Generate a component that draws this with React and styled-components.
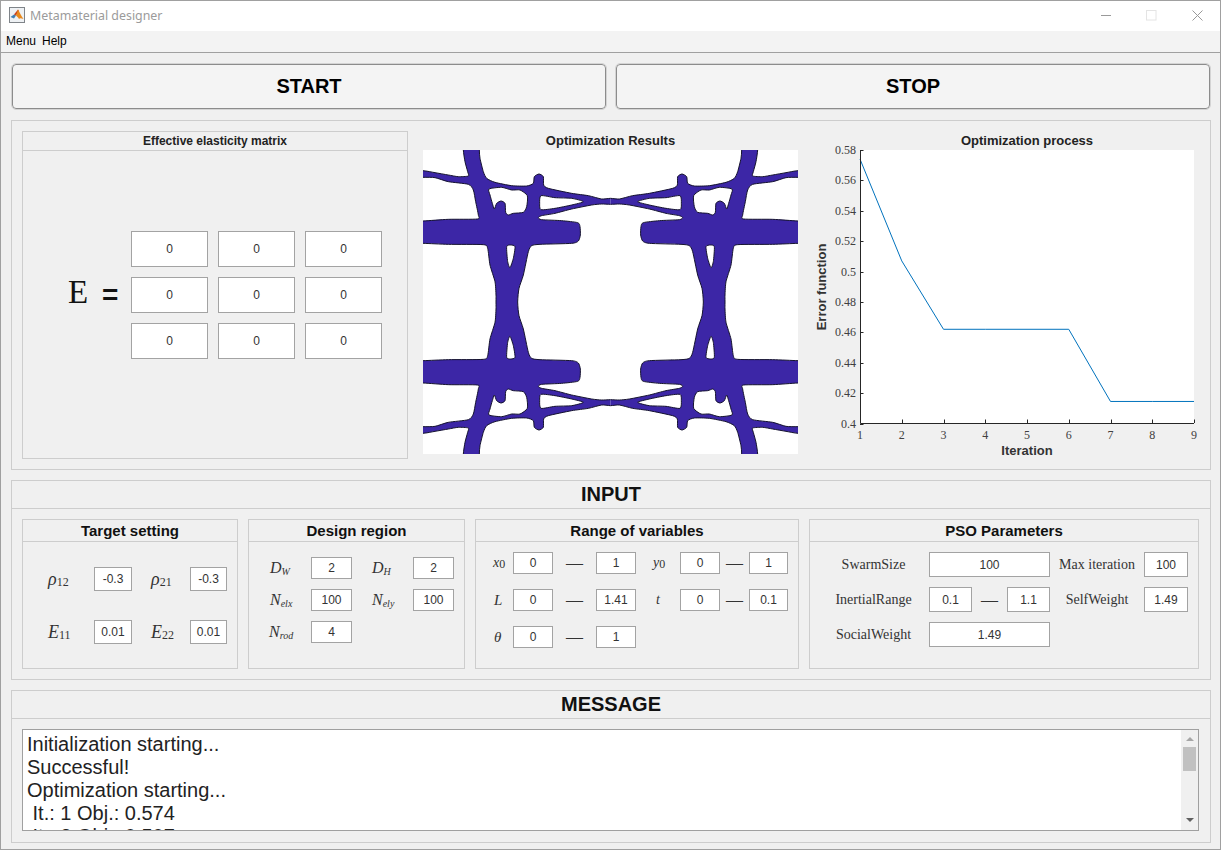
import styled, { createGlobalStyle } from "styled-components";

const GlobalStyle = createGlobalStyle`
  html, body {
    margin: 0;
    padding: 0;
    background: #f0f0f0;
    font-family: "Liberation Sans", Arial, sans-serif;
  }
  * {
    box-sizing: border-box;
  }
`;

const Win = styled.div`
  width: 1221px;
  height: 850px;
  overflow: hidden;
  background: #f0f0f0;
  border: 1px solid #a0a0a0;
`;

const TitleBar = styled.div`
  height: 30px;
  background: #fff;
  display: flex;
  align-items: center;
  padding: 0 0 2px 8px;
`;
const TitleText = styled.div`
  flex: 1;
  margin-left: 5px;
  font-family: "Noto Sans", sans-serif;
  font-size: 12.4px;
  color: #9b9b9b;
`;
const WinCtrl = styled.div`
  width: 45.5px;
  height: 28px;
  display: flex;
  align-items: center;
  justify-content: center;
`;

const MenuBar = styled.div`
  height: 22px;
  background: #f3f3f3;
  border-bottom: 1px solid #a0a0a0;
  display: flex;
  align-items: center;
  gap: 6px;
  padding: 0 5px 1px;
  font-size: 12px;
  color: #000;
`;

const Content = styled.div`
  padding: 11px 9px 0 10px;
  display: flex;
  flex-direction: column;
  gap: 10px;
`;

const ButtonRow = styled.div`
  display: grid;
  grid-template-columns: 1fr 1fr;
  gap: 10px;
  padding: 0 1px;
  margin-bottom: 1px;
`;
const BigButton = styled.button`
  height: 45px;
  background: #f4f4f4;
  border: 1px solid #8c8c8c;
  border-radius: 4px;
  outline: 1px solid #d4d4d4;
  font-family: "Liberation Sans", Arial, sans-serif;
  font-size: 20px;
  font-weight: 700;
  color: #000;
  padding: 0;
`;

const Panel = styled.section`
  height: ${(p) => p.$h}px;
  border: 1px solid #cdcdcd;
`;
const PanelHead = styled.div`
  height: 28px;
  border-bottom: 1px solid #cdcdcd;
  text-align: center;
  font-size: 20px;
  font-weight: 700;
  line-height: 26px;
  color: #111;
`;

const TopBody = styled.div`
  display: flex;
  padding: 10px;
`;

const SubPanel = styled.div`
  border: 1px solid #cdcdcd;
  display: flex;
  flex-direction: column;
  min-width: 0;
`;
const MatrixPanel = styled(SubPanel)`
  width: 386px;
  height: 328px;
  margin-right: 15px;
`;
const MatrixHead = styled.div`
  height: 19px;
  border-bottom: 1px solid #cdcdcd;
  text-align: center;
  font-size: 12px;
  font-weight: 700;
  line-height: 18px;
  color: #222;
`;
const MatrixBody = styled.div`
  flex: 1;
  display: flex;
  align-items: center;
  padding: 0 25px 20px 45px;
`;
const BigE = styled.div`
  font-family: "Liberation Serif", serif;
  font-size: 33px;
  color: #111;
  width: 34px;
  padding-bottom: 4px;
`;
const Equals = styled.div`
  font-size: 28px;
  font-weight: 700;
  color: #111;
  flex: 1;
`;
const MatrixGrid = styled.div`
  display: grid;
  grid-template-columns: repeat(3, 77px);
  grid-auto-rows: 36px;
  gap: 10px;
`;

const Field = styled.div`
  background: #fff;
  border: 1px solid #a3a3a3;
  display: flex;
  align-items: center;
  justify-content: center;
  font-size: 12px;
  color: #333;
  grid-column: ${(p) => (p.$span ? `span ${p.$span}` : "auto")};
`;

const ResultBlock = styled.div`
  width: 375px;
  display: flex;
  flex-direction: column;
`;
const ResultTitle = styled.div`
  height: 19px;
  text-align: center;
  font-size: 13px;
  font-weight: 700;
  line-height: 19px;
  color: #222;
`;
const ResultPlot = styled.svg`
  display: block;
  width: 375px;
  height: 304px;
  background: #fff;
`;
const ChartSvg = styled.svg`
  display: block;
  width: 402px;
  height: 328px;
`;

const InputBody = styled.div`
  display: grid;
  grid-template-columns: 216px 217px 324px 390px;
  gap: 10px;
  padding: 10px;
`;
const SubHead = styled.div`
  height: 22px;
  border-bottom: 1px solid #cdcdcd;
  text-align: center;
  font-size: 15px;
  font-weight: 700;
  line-height: 21px;
  color: #111;
`;
const SubPanelFixed = styled(SubPanel)`
  height: 150px;
`;

const ParamGrid = styled.div`
  display: grid;
  grid-template-columns: ${(p) => p.$cols};
  grid-auto-rows: ${(p) => p.$rowH}px;
  row-gap: ${(p) => p.$gap}px;
  padding-top: ${(p) => p.$top}px;
`;
const MathLabel = styled.div`
  display: flex;
  align-items: center;
  padding-left: ${(p) => p.$pad || 0}px;
`;
const MathText = styled.span`
  font-family: "Liberation Serif", serif;
  font-style: italic;
  font-size: ${(p) => p.$size || 16}px;
  color: #333;
  white-space: nowrap;
`;
const Sub = styled.sub`
  font-size: ${(p) => p.$size || 10}px;
  font-style: ${(p) => (p.$upright ? "normal" : "italic")};
  line-height: 0;
  vertical-align: ${(p) => (p.$upright ? "-0.1em" : "-0.2em")};
`;
const Dash = styled.div`
  font-family: "Liberation Serif", serif;
  font-size: 17px;
  color: #333;
  display: flex;
  align-items: center;
  justify-content: center;
`;
const TextLabel = styled.div`
  font-family: "Liberation Serif", serif;
  font-size: 14px;
  color: #333;
  display: flex;
  align-items: center;
  justify-content: center;
  padding-left: ${(p) => p.$pad || 0}px;
  white-space: nowrap;
`;

const MessageBody = styled.div`
  padding: 10px 11px 10px 10px;
`;
const MessageBox = styled.div`
  height: 102px;
  border: 1px solid #a0a0a0;
  background: #fff;
  display: flex;
`;
const MessageText = styled.div`
  flex: 1;
  overflow: hidden;
  padding: 3px 0 0 4px;
  font-size: 20px;
  line-height: 23px;
  color: #222;
  white-space: pre;
`;
const ScrollTrack = styled.div`
  width: 17px;
  background: #f0f0f0;
  display: flex;
  flex-direction: column;
  align-items: center;
  padding: 7px 2px 8px;
`;
const ArrowUp = styled.div`
  width: 0;
  height: 0;
  border-left: 4px solid transparent;
  border-right: 4px solid transparent;
  border-bottom: 4px solid #a6a6a6;
`;
const ArrowDown = styled.div`
  width: 0;
  height: 0;
  margin-top: auto;
  border-left: 4px solid transparent;
  border-right: 4px solid transparent;
  border-top: 4px solid #606060;
`;
const ScrollThumb = styled.div`
  width: 13px;
  height: 24px;
  margin-top: 6px;
  background: #c1c1c1;
`;

// outline of one quarter of the unit cell, in 3x px of the plot
const outline = [
  [145, 30], [145, 75], [150, 110], [158, 140], [160, 153], [130, 155], [100, 150], [60, 143], [24, 137], [-30, 137],
  [-30, 157], [24, 157], [60, 158], [100, 170], [160, 178], [175, 195], [182, 230], [190, 270], [187, 282], [100, 283], [24, 288], [-30, 288],
  [-30, 355], [24, 355], [100, 358], [205, 359], [218, 370], [225, 420], [240, 470], [243, 510], [243, 531], [243, 620],
  [308, 620], [308, 531], [312, 490], [325, 450], [340, 380], [350, 362], [375, 358], [470, 355], [490, 348], [496, 330], [495, 305], [488, 293],
  [440, 287], [380, 284], [370, 278], [380, 272], [420, 265], [470, 252], [530, 240], [560, 237], [587, 238], [640, 238],
  [640, 220], [587, 220], [560, 222], [520, 212], [470, 205], [400, 190], [386, 180], [385, 155], [372, 147], [358, 155], [355, 175], [335, 183],
  [290, 182], [240, 172], [215, 160], [205, 140], [195, 100], [193, 75], [193, 30],
];
const holes = [
  [[222, 192], [260, 187], [290, 195], [315, 195], [337, 212], [335, 245], [325, 262], [295, 265], [280, 270], [272, 262], [270, 235], [258, 228], [245, 235], [238, 252], [232, 235], [225, 210]],
  [[378, 212], [420, 218], [470, 220], [505, 230], [470, 240], [420, 250], [378, 254], [374, 235]],
  [[275, 365], [287, 360], [300, 365], [295, 400], [285, 428], [278, 410]],
];

// closed curve through the points, kept tight so corners stay close to them
function smooth(pts) {
  const n = pts.length;
  const at = (i) => pts[(i + n) % n];
  const k = 1 / 9;
  let d = `M${pts[0][0]} ${pts[0][1]}`;
  pts.forEach((p, i) => {
    const a = at(i - 1);
    const b = at(i + 1);
    const c = at(i + 2);
    d += `C${p[0] + (b[0] - a[0]) * k} ${p[1] + (b[1] - a[1]) * k} ${b[0] - (c[0] - p[0]) * k} ${b[1] - (c[1] - p[1]) * k} ${b[0]} ${b[1]}`;
  });
  return d + "Z";
}
const cellPath = [outline, ...holes].map(smooth).join("");
const quarters = ["", "matrix(-1 0 0 1 1173 0)", "matrix(1 0 0 -1 0 1062)", "matrix(-1 0 0 -1 1173 1062)"];

function CellPlot() {
  return (
    <ResultPlot viewBox="24 75 1125 912">
      <defs>
        <clipPath id="quarter">
          <rect x="0" y="50" width="586.5" height="481" />
        </clipPath>
      </defs>
      {quarters.map((t) => (
        <g key={t} transform={t}>
          <path d={cellPath} clipPath="url(#quarter)" fill="#3c26a6" fillRule="evenodd" stroke="#15132e" strokeWidth="3" />
        </g>
      ))}
    </ResultPlot>
  );
}

const errors = [0.574, 0.507, 0.462, 0.462, 0.462, 0.462, 0.4145, 0.4145, 0.4145];
const yTicks = ["0.4", "0.42", "0.44", "0.46", "0.48", "0.5", "0.52", "0.54", "0.56", "0.58"];
const px = (i) => 860 + (i * 334) / 8;
const py = (v) => 423.5 - ((v - 0.4) / 0.18) * 273.5;

function ErrorChart() {
  return (
    <ChartSvg viewBox="798 131 402 328">
      <rect x="860" y="150" width="334" height="273" fill="#fff" />
      <polyline
        points={errors.map((v, i) => `${px(i)},${py(v)}`).join(" ")}
        fill="none"
        stroke="#0072bd"
        strokeWidth="1"
      />
      <path d="M860.5 150V423.5H1194" fill="none" stroke="#262626" strokeWidth="1" />
      {yTicks.map((t) => {
        const y = Math.round(py(parseFloat(t))) + 0.5;
        return (
          <g key={t}>
            <path d={`M860 ${y}h3.5`} stroke="#262626" />
            <text x="856" y={y + 3} textAnchor="end" fontFamily="Liberation Serif" fontSize="12" fill="#404040">{t}</text>
          </g>
        );
      })}
      {errors.map((_, i) => {
        const x = Math.round(px(i)) + 0.5;
        return (
          <g key={i}>
            <path d={`M${x} 423v-3.5`} stroke="#262626" />
            <text x={px(i)} y="439" textAnchor="middle" fontFamily="Liberation Serif" fontSize="12" fill="#404040">{i + 1}</text>
          </g>
        );
      })}
      <text x="1027" y="145" textAnchor="middle" fontFamily="Liberation Sans" fontSize="13" fontWeight="700" fill="#222">Optimization process</text>
      <text x="1027" y="455" textAnchor="middle" fontFamily="Liberation Sans" fontSize="13" fontWeight="700" fill="#333">Iteration</text>
      <text transform="translate(826 287) rotate(-90)" textAnchor="middle" fontFamily="Liberation Sans" fontSize="13" fontWeight="700" fill="#333">Error function</text>
    </ChartSvg>
  );
}

function MatlabIcon() {
  return (
    <svg width="16" height="16" viewBox="0 0 16 16">
      <rect x="0.5" y="0.5" width="15" height="15" fill="#eef1f4" stroke="#7f8489" />
      <path d="M1.5 10L5 7.5 7 8.5 5 11.5z" fill="#3f7fb5" />
      <path d="M5 7.5L9 2.5 10 4 7 8.5z" fill="#c9431f" />
      <path d="M9 2.5C10.5 5 12 9 14.5 12 12.5 11.5 11 10.5 10 12 9 10 8 9.5 7 8.5 8 6 8.5 4 9 2.5z" fill="#e8891e" />
    </svg>
  );
}

function MinIcon() {
  return <svg width="11" height="11" viewBox="0 0 11 11"><path d="M0 5.5h10" stroke="#9a9a9a" /></svg>;
}
function MaxIcon() {
  return <svg width="11" height="11" viewBox="0 0 11 11"><rect x="0.5" y="0.5" width="9.5" height="9.5" fill="none" stroke="#e4e4e4" /></svg>;
}
function CloseIcon() {
  return <svg width="11" height="11" viewBox="0 0 11 11"><path d="M0.5 0.5l10 10M10.5 0.5l-10 10" stroke="#999" /></svg>;
}

const messages = ["Initialization starting...", "Successful!", "Optimization starting...", " It.: 1 Obj.: 0.574", " It.: 2 Obj.: 0.507"];

export default function App() {
  return (
    <>
      <GlobalStyle />
      <Win>
        <TitleBar>
          <MatlabIcon />
          <TitleText>Metamaterial designer</TitleText>
          <WinCtrl><MinIcon /></WinCtrl>
          <WinCtrl><MaxIcon /></WinCtrl>
          <WinCtrl><CloseIcon /></WinCtrl>
        </TitleBar>
        <MenuBar>
          <span>Menu</span>
          <span>Help</span>
        </MenuBar>
        <Content>
          <ButtonRow>
            <BigButton>START</BigButton>
            <BigButton>STOP</BigButton>
          </ButtonRow>

          <Panel $h={350}>
            <TopBody>
              <MatrixPanel>
                <MatrixHead>Effective elasticity matrix</MatrixHead>
                <MatrixBody>
                  <BigE>E</BigE>
                  <Equals>=</Equals>
                  <MatrixGrid>
                    {Array.from({ length: 9 }).map((_, i) => (
                      <Field key={i}>0</Field>
                    ))}
                  </MatrixGrid>
                </MatrixBody>
              </MatrixPanel>
              <ResultBlock>
                <ResultTitle>Optimization Results</ResultTitle>
                <CellPlot />
              </ResultBlock>
              <ErrorChart />
            </TopBody>
          </Panel>

          <Panel $h={200}>
            <PanelHead>INPUT</PanelHead>
            <InputBody>
              <SubPanelFixed>
                <SubHead>Target setting</SubHead>
                <ParamGrid $cols="71px 38px 58px 37px" $rowH={24} $gap={29} $top={25}>
                  <MathLabel $pad={25}><MathText $size={18}>ρ<Sub $size={12} $upright>12</Sub></MathText></MathLabel>
                  <Field>-0.3</Field>
                  <MathLabel $pad={19}><MathText $size={18}>ρ<Sub $size={12} $upright>21</Sub></MathText></MathLabel>
                  <Field>-0.3</Field>
                  <MathLabel $pad={25}><MathText $size={18}>E<Sub $size={12} $upright>11</Sub></MathText></MathLabel>
                  <Field>0.01</Field>
                  <MathLabel $pad={19}><MathText $size={18}>E<Sub $size={12} $upright>22</Sub></MathText></MathLabel>
                  <Field>0.01</Field>
                </ParamGrid>
              </SubPanelFixed>

              <SubPanelFixed>
                <SubHead>Design region</SubHead>
                <ParamGrid $cols="62px 41px 61px 41px" $rowH={22} $gap={10} $top={15}>
                  <MathLabel $pad={21}><MathText>D<Sub>W</Sub></MathText></MathLabel>
                  <Field>2</Field>
                  <MathLabel $pad={20}><MathText>D<Sub>H</Sub></MathText></MathLabel>
                  <Field>2</Field>
                  <MathLabel $pad={21}><MathText>N<Sub>elx</Sub></MathText></MathLabel>
                  <Field>100</Field>
                  <MathLabel $pad={20}><MathText>N<Sub>ely</Sub></MathText></MathLabel>
                  <Field>100</Field>
                  <MathLabel $pad={20}><MathText>N<Sub>rod</Sub></MathText></MathLabel>
                  <Field>4</Field>
                </ParamGrid>
              </SubPanelFixed>

              <SubPanelFixed>
                <SubHead>Range of variables</SubHead>
                <ParamGrid $cols="37px 40px 43px 40px 44px 40px 29px 39px" $rowH={22} $gap={15} $top={10}>
                  <MathLabel $pad={17}><MathText $size={14}>x<Sub $size={12} $upright>0</Sub></MathText></MathLabel>
                  <Field>0</Field>
                  <Dash>—</Dash>
                  <Field>1</Field>
                  <MathLabel $pad={17}><MathText $size={14}>y<Sub $size={12} $upright>0</Sub></MathText></MathLabel>
                  <Field>0</Field>
                  <Dash>—</Dash>
                  <Field>1</Field>
                  <MathLabel $pad={18}><MathText $size={15}>L</MathText></MathLabel>
                  <Field>0</Field>
                  <Dash>—</Dash>
                  <Field>1.41</Field>
                  <MathLabel $pad={20}><MathText $size={14}>t</MathText></MathLabel>
                  <Field>0</Field>
                  <Dash>—</Dash>
                  <Field>0.1</Field>
                  <MathLabel $pad={18}><MathText $size={15}>θ</MathText></MathLabel>
                  <Field>0</Field>
                  <Dash>—</Dash>
                  <Field>1</Field>
                </ParamGrid>
              </SubPanelFixed>

              <SubPanelFixed>
                <SubHead>PSO Parameters</SubHead>
                <ParamGrid $cols="119px 43px 35px 43px 94px 44px" $rowH={25} $gap={10} $top={10}>
                  <TextLabel $pad={8}>SwarmSize</TextLabel>
                  <Field $span={3}>100</Field>
                  <TextLabel>Max iteration</TextLabel>
                  <Field>100</Field>
                  <TextLabel $pad={8}>InertialRange</TextLabel>
                  <Field>0.1</Field>
                  <Dash>—</Dash>
                  <Field>1.1</Field>
                  <TextLabel>SelfWeight</TextLabel>
                  <Field>1.49</Field>
                  <TextLabel $pad={8}>SocialWeight</TextLabel>
                  <Field $span={3}>1.49</Field>
                </ParamGrid>
              </SubPanelFixed>
            </InputBody>
          </Panel>

          <Panel $h={153}>
            <PanelHead>MESSAGE</PanelHead>
            <MessageBody>
              <MessageBox>
                <MessageText>{messages.join("\n")}</MessageText>
                <ScrollTrack>
                  <ArrowUp />
                  <ScrollThumb />
                  <ArrowDown />
                </ScrollTrack>
              </MessageBox>
            </MessageBody>
          </Panel>
        </Content>
      </Win>
    </>
  );
}
